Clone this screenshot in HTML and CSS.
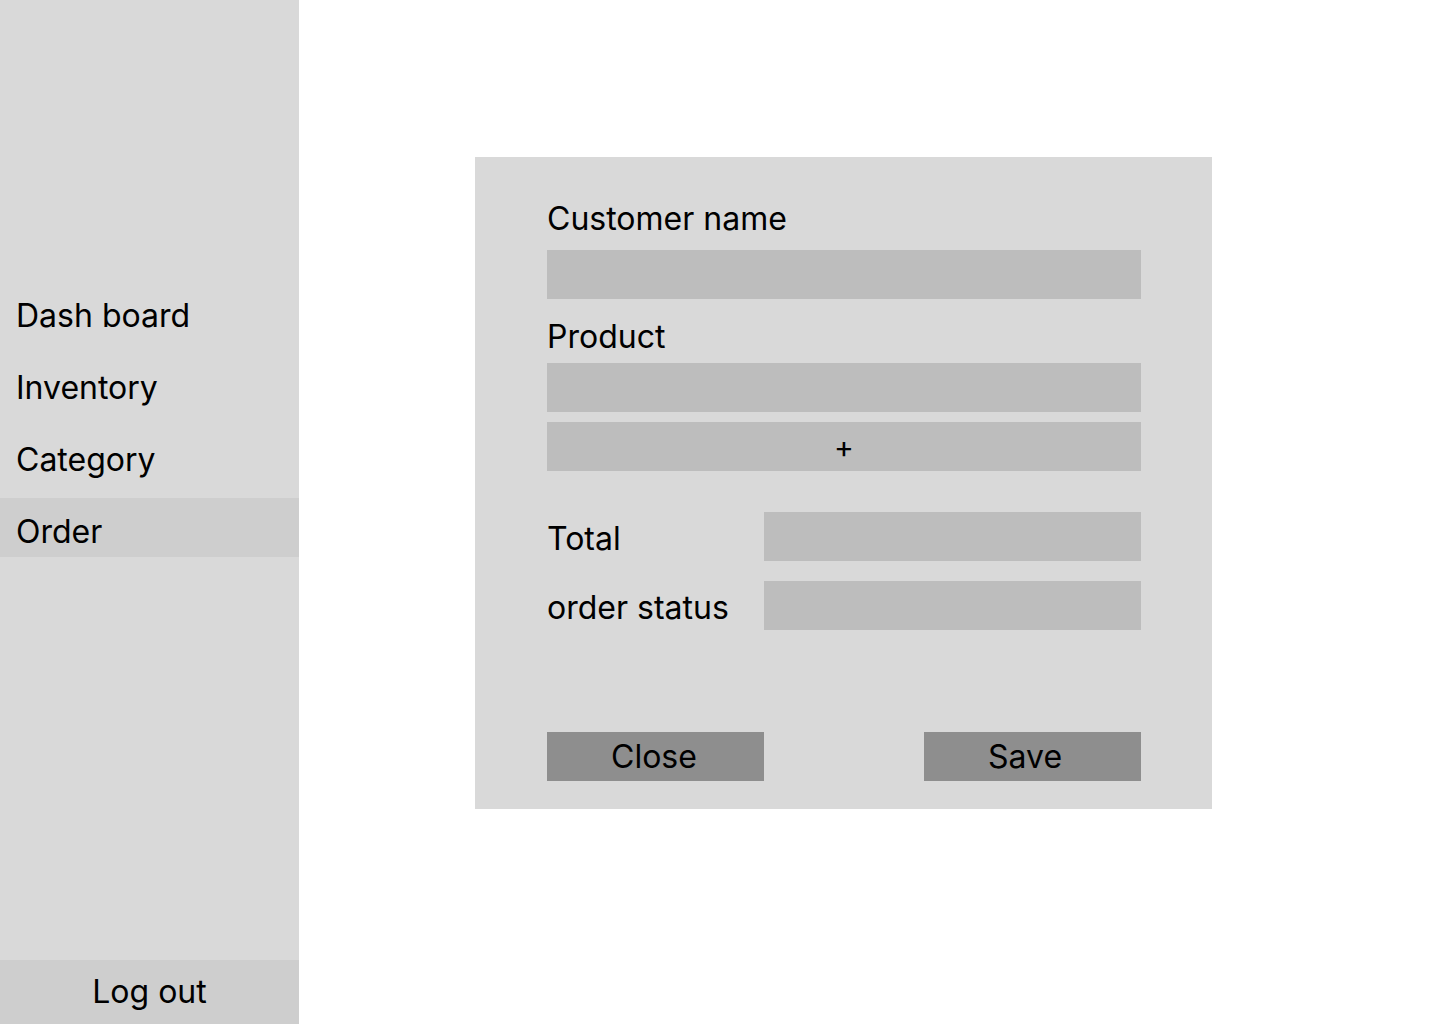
FILE: index.html
```html
<!DOCTYPE html>
<html lang="en">
<head>
<meta charset="utf-8">
<title>Order</title>
<link rel="stylesheet" href="styles.css">
</head>
<body>
<div class="app">
  <aside class="sidebar">
    <nav class="nav">
      <div class="nav-item">Dash board</div>
      <div class="nav-item">Inventory</div>
      <div class="nav-item">Category</div>
      <div class="nav-item active">Order</div>
    </nav>
    <div class="logout">Log out</div>
  </aside>
  <main class="main">
    <section class="modal">
      <div class="label label-first">Customer name</div>
      <div class="field"></div>
      <div class="label label-product">Product</div>
      <div class="field field-product"></div>
      <div class="field add-btn">+</div>
      <div class="row row-total">
        <div class="row-label">Total</div>
        <div class="field row-field"></div>
      </div>
      <div class="row row-status">
        <div class="row-label">order status</div>
        <div class="field row-field"></div>
      </div>
      <div class="actions">
        <div class="btn">Close</div>
        <div class="btn">Save</div>
      </div>
    </section>
  </main>
</div>
</body>
</html>
```

FILE: styles.css
```css
html, body {
  margin: 0;
  padding: 0;
  background: #ffffff;
}
body {
  font-family: Inter, "Noto Sans", sans-serif;
  font-size: 32px;
  line-height: 39px;
  color: #000000;
}
.app {
  display: flex;
  width: 1440px;
  height: 1024px;
}
.sidebar {
  width: 299px;
  flex: 0 0 299px;
  background: #d9d9d9;
  display: flex;
  flex-direction: column;
}
.nav {
  margin-top: 282px;
  display: flex;
  flex-direction: column;
  gap: 13px;
}
.nav-item {
  height: 59px;
  box-sizing: border-box;
  padding: 14px 16px 6px;
}
.nav-item.active {
  background: #cecece;
}
.logout {
  margin-top: auto;
  height: 64px;
  box-sizing: border-box;
  padding-bottom: 2px;
  background: #cecece;
  display: flex;
  align-items: center;
  justify-content: center;
}
.main {
  flex: 1;
  padding: 157px 0 0 176px;
}
.modal {
  width: 737px;
  height: 652px;
  box-sizing: border-box;
  background: #d9d9d9;
  padding: 42px 71px 0 72px;
  display: flex;
  flex-direction: column;
}
.label-first {
  margin-bottom: 12px;
}
.field {
  height: 49px;
  background: #bdbdbd;
}
.label-product {
  margin-top: 18px;
  margin-bottom: 7px;
}
.add-btn {
  margin-top: 10px;
  display: flex;
  align-items: center;
  justify-content: center;
  font-size: 30px;
  padding-top: 2px;
  box-sizing: border-box;
}
.row {
  display: flex;
  align-items: center;
}
.row-total {
  margin-top: 41px;
}
.row-status {
  margin-top: 20px;
}
.row-label {
  width: 217px;
  flex: 0 0 217px;
  padding-top: 3px;
}
.row-field {
  flex: 1;
}
.actions {
  margin-top: 102px;
  display: flex;
  justify-content: space-between;
}
.btn {
  width: 217px;
  height: 49px;
  box-sizing: border-box;
  background: #8e8e8e;
  padding: 5px 0 0 64px;
}
```
